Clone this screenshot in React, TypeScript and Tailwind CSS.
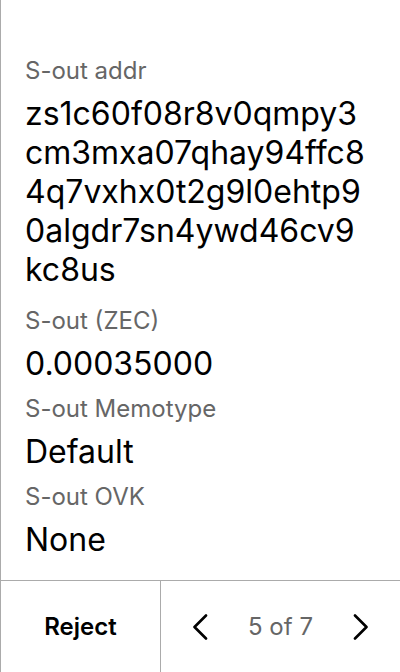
import React from "react";

function Field({ label, lines, extra }: { label: string; lines: string[]; extra?: boolean }) {
  return (
    <div className={extra ? "flex flex-col pb-[6px]" : "flex flex-col"}>
      <div className="text-[24px] leading-[30px] text-[#666666]">{label}</div>
      <div className="mt-[8px] text-[32px] leading-[39px] text-black">
        {lines.map((l, i) => (
          <div key={i}>{l}</div>
        ))}
      </div>
    </div>
  );
}

export default function App() {
  return (
    <div
      className="w-[400px] h-[672px] bg-white border-l border-[#ababab] flex flex-col overflow-hidden"
      style={{ fontFamily: "Inter, 'Noto Sans', sans-serif" }}
    >
      <div className="flex-1 pl-6 pt-[56px] flex flex-col gap-[11px]">
        <Field
          extra
          label="S-out addr"
          lines={["zs1c60f08r8v0qmpy3", "cm3mxa07qhay94ffc8", "4q7vxhx0t2g9l0ehtp9", "0algdr7sn4ywd46cv9", "kc8us"]}
        />
        <Field label="S-out (ZEC)" lines={["0.00035000"]} />
        <Field label="S-out Memotype" lines={["Default"]} />
        <Field label="S-out OVK" lines={["None"]} />
      </div>
      <div className="h-[92px] border-t border-[#ababab] flex">
        <div className="w-[160px] border-r border-[#ababab] flex items-center justify-center text-[24px] font-semibold text-black">
          Reject
        </div>
        <div className="flex-1 flex items-center justify-between pl-[31px] pr-[31px]">
          <svg width="16" height="26" viewBox="0 0 16 26" fill="none">
            <path d="M14 1.5 L2.5 13 L14 24.5" stroke="black" strokeWidth="2.6" strokeLinecap="round" strokeLinejoin="round" />
          </svg>
          <div className="text-[24px] text-[#666666]">5 of 7</div>
          <svg width="16" height="26" viewBox="0 0 16 26" fill="none">
            <path d="M2 1.5 L13.5 13 L2 24.5" stroke="black" strokeWidth="2.6" strokeLinecap="round" strokeLinejoin="round" />
          </svg>
        </div>
      </div>
    </div>
  );
}
